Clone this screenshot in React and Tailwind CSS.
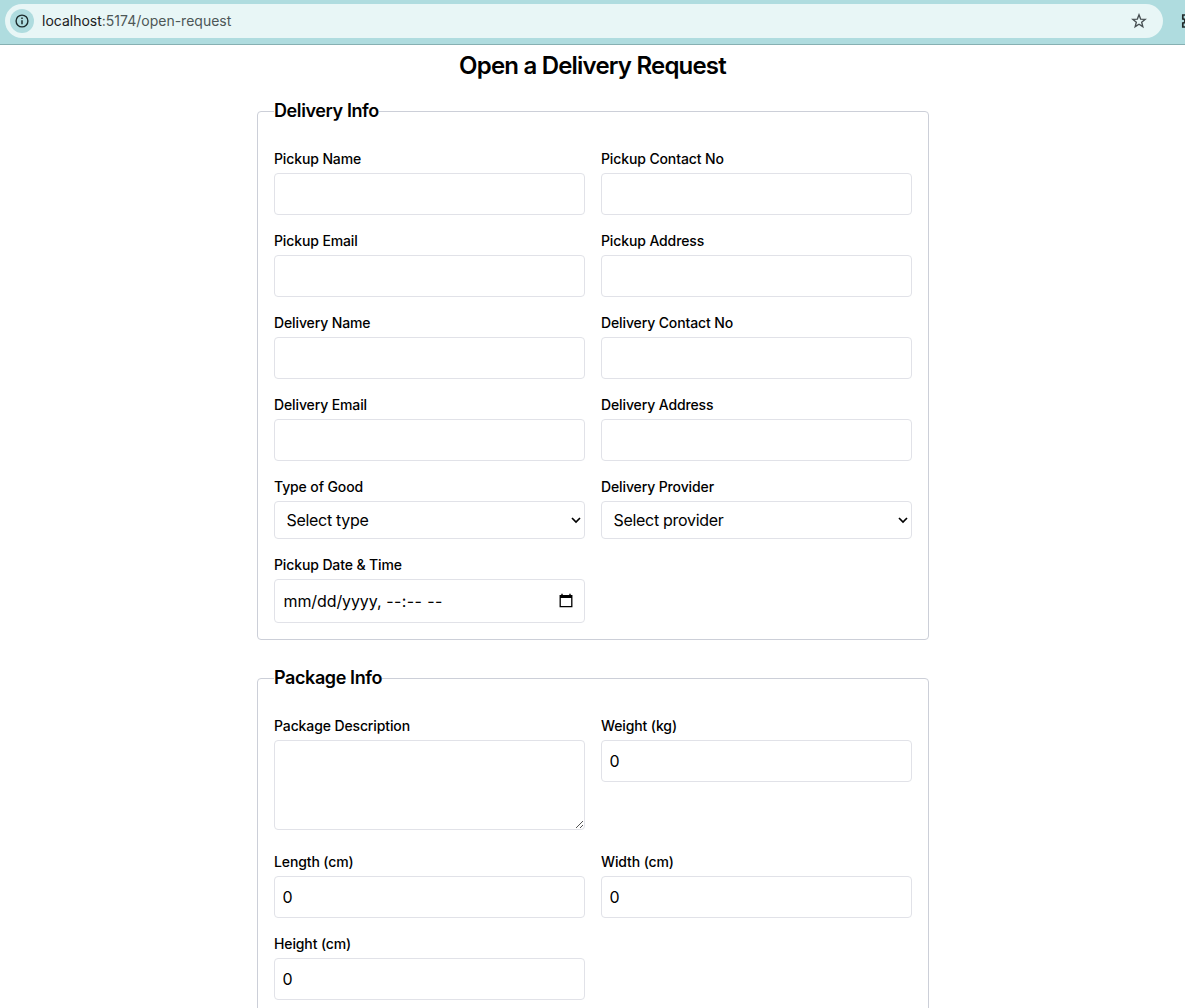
import { useState } from 'react';

const control =
  'block w-full rounded border border-[#e1e2e8] bg-white text-base text-black outline-none';

function Field({ label, children }) {
  return (
    <label className="block">
      <span className="mb-1 block whitespace-nowrap pl-[0.5px] text-sm font-medium leading-5 tracking-[-0.12px]">{label}</span>
      {children}
    </label>
  );
}

function TextField({ label, initial = '' }) {
  const [value, setValue] = useState(initial);
  return (
    <Field label={label}>
      <input
        className={control + ' h-[42px] px-2'}
        value={value}
        onChange={(e) => setValue(e.target.value)}
      />
    </Field>
  );
}

function SelectField({ label, placeholder }) {
  return (
    <Field label={label}>
      <div className="relative">
        <select className={control + ' h-[38px] appearance-none px-3 tracking-[-0.3px]'}>
          <option>{placeholder}</option>
        </select>
        <svg className="pointer-events-none absolute right-[3px] top-[15px]" width="12" height="8" viewBox="0 0 12 8" fill="none">
          <path d="M2 2l4 4 4-4" stroke="#000" strokeWidth="1.7" />
        </svg>
      </div>
    </Field>
  );
}

function Section({ title, children }) {
  return (
    <fieldset className="mb-6 rounded border border-[#cccfd8] px-4 pb-4">
      <legend className="pl-[0.5px] text-lg font-semibold leading-7 tracking-[-0.4px]">{title}</legend>
      <div className="grid grid-cols-2 gap-4 pt-6">{children}</div>
    </fieldset>
  );
}

function AddressBar() {
  return (
    <header className="flex h-[45px] shrink-0 items-start overflow-hidden border-b border-[#86b0b2] bg-[#afdcdf] pl-[5px] pt-1">
      <div className="flex h-[34px] w-[1158px] shrink-0 items-center rounded-full bg-[#e8f6f6] pl-[5px] pr-4">
        <span className="flex size-6 items-center justify-center rounded-full bg-[#afdcdf]">
          <svg width="14" height="14" viewBox="0 0 14 14" fill="none">
            <circle cx="7" cy="7" r="5.9" stroke="#1c2b2c" strokeWidth="1.4" />
            <path d="M7 6.2v4M7 3.6V5" stroke="#1c2b2c" strokeWidth="1.5" />
          </svg>
        </span>
        <span className="ml-2 text-sm leading-5 text-[#4d5757]">
          <span className="text-[#1b2020]">localhost</span>:5174/open-request
        </span>
        <svg className="ml-auto" width="16" height="16" viewBox="0 0 16 16" fill="none">
          <path d="M8 1.8l1.65 4.25 4.55.28-3.52 2.9 1.14 4.42L8 11.2l-3.82 2.45 1.14-4.42L1.8 6.33l4.55-.28z" stroke="#474f52" strokeWidth="1.35" />
        </svg>
      </div>
      <svg className="ml-[18px] mt-[9px] shrink-0" width="16" height="16" viewBox="0 0 16 16" fill="none">
        <path d="M1.8 2h3.4a2 2 0 0 1 4 0h4v4a2 2 0 0 1 0 4v4H1.8v-3.8a2.2 2.2 0 0 0 0-4.4z" stroke="#222b2c" strokeWidth="1.7" />
      </svg>
    </header>
  );
}

export default function App() {
  return (
    <div className="flex h-screen flex-col overflow-hidden bg-white font-['Inter',sans-serif] text-black">
      <AddressBar />
      <main className="mx-auto w-[672px] pt-[5px]">
        <h1 className="mb-[15px] text-center text-2xl font-semibold leading-8 tracking-[-0.8px]">Open a Delivery Request</h1>
        <Section title="Delivery Info">
          <TextField label="Pickup Name" />
          <TextField label="Pickup Contact No" />
          <TextField label="Pickup Email" />
          <TextField label="Pickup Address" />
          <TextField label="Delivery Name" />
          <TextField label="Delivery Contact No" />
          <TextField label="Delivery Email" />
          <TextField label="Delivery Address" />
          <SelectField label="Type of Good" placeholder="Select type" />
          <SelectField label="Delivery Provider" placeholder="Select provider" />
          <Field label="Pickup Date & Time">
            <div className={control + ' !flex h-11 items-center justify-between pl-[9px] pr-[11px]'}>
              <span className="whitespace-pre">
                <span className="tracking-[-0.1px]">mm/dd/yyyy,</span>
                <span className="tracking-[0.4px]"> --:-- --</span>
              </span>
              <svg width="14" height="16" viewBox="0 0 14 16" fill="none">
                <path d="M3 .8v2M11 .8v2" stroke="#000" strokeWidth="1.4" />
                <path d="M1.2 2.6h11.6v11H1.2z" stroke="#000" strokeWidth="1.3" />
                <path d="M1 2h12v3H1z" fill="#000" />
              </svg>
            </div>
          </Field>
        </Section>
        <Section title="Package Info">
          <Field label="Package Description">
            <div className="relative mb-1.5">
              <textarea className={control + ' h-[90px] resize-none p-2'} />
              <svg className="pointer-events-none absolute bottom-px right-px" width="10" height="10" viewBox="0 0 10 10">
                <path d="M2 9l7-7M6 9l3-3" stroke="#555" strokeWidth="1" />
              </svg>
            </div>
          </Field>
          <TextField label="Weight (kg)" initial="0" />
          <TextField label="Length (cm)" initial="0" />
          <TextField label="Width (cm)" initial="0" />
          <TextField label="Height (cm)" initial="0" />
        </Section>
      </main>
    </div>
  );
}
